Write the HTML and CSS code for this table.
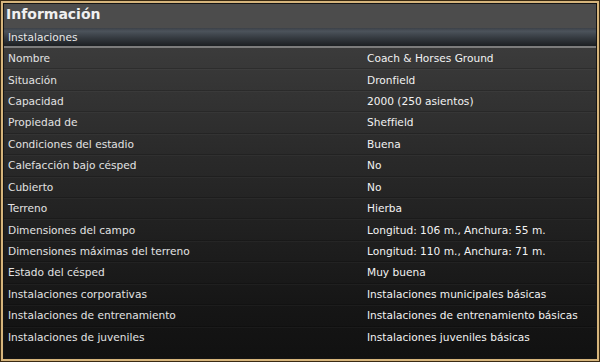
FILE: index.html
```html
<!DOCTYPE html>
<html lang="es">
<head>
<meta charset="utf-8">
<link rel="stylesheet" href="styles.css">
</head>
<body>
<div class="frame">
  <div class="panel">
    <div class="title">Información</div>
    <div class="section">Instalaciones</div>
    <div class="rows">
      <div class="row"><span class="label">Nombre</span><span class="value">Coach &amp; Horses Ground</span></div>
      <div class="row"><span class="label">Situación</span><span class="value">Dronfield</span></div>
      <div class="row"><span class="label">Capacidad</span><span class="value">2000 (250 asientos)</span></div>
      <div class="row"><span class="label">Propiedad de</span><span class="value">Sheffield</span></div>
      <div class="row"><span class="label">Condiciones del estadio</span><span class="value">Buena</span></div>
      <div class="row"><span class="label">Calefacción bajo césped</span><span class="value">No</span></div>
      <div class="row"><span class="label">Cubierto</span><span class="value">No</span></div>
      <div class="row"><span class="label">Terreno</span><span class="value">Hierba</span></div>
      <div class="row"><span class="label">Dimensiones del campo</span><span class="value">Longitud: 106 m., Anchura: 55 m.</span></div>
      <div class="row"><span class="label">Dimensiones máximas del terreno</span><span class="value">Longitud: 110 m., Anchura: 71 m.</span></div>
      <div class="row"><span class="label">Estado del césped</span><span class="value">Muy buena</span></div>
      <div class="row"><span class="label">Instalaciones corporativas</span><span class="value">Instalaciones municipales básicas</span></div>
      <div class="row"><span class="label">Instalaciones de entrenamiento</span><span class="value">Instalaciones de entrenamiento básicas</span></div>
      <div class="row"><span class="label">Instalaciones de juveniles</span><span class="value">Instalaciones juveniles básicas</span></div>
    </div>
  </div>
</div>
</body>
</html>
```

FILE: styles.css
```css
* { box-sizing: border-box; }
html, body { margin: 0; padding: 0; }
body {
  width: 600px;
  height: 362px;
  background: #2a1e0c;
  font-family: "DejaVu Sans", sans-serif;
}
.frame {
  width: 600px;
  height: 362px;
  border: 1px solid #3a2a12;
  background: #d6b57c;
  padding: 2px;
}
.panel {
  height: 100%;
  border: 1px solid #141414;
  background: linear-gradient(to bottom, #424242 0px, #2a2a2a 150px, #161616 300px, #111111 354px);
  display: flex;
  flex-direction: column;
}
.title {
  height: 24px;
  background: #4c4c4c;
  color: #f0f0f0;
  font-weight: bold;
  font-size: 14px;
  line-height: 21px;
  padding-left: 2px;
}
.section {
  height: 20px;
  background: linear-gradient(to bottom, #3c4148 0%, #4c535b 18%, #353a40 55%, #1c1f22 100%);
  border-bottom: 2px solid #7c7c7c;
  color: #e8e8e8;
  font-size: 10.6px;
  line-height: 19px;
  padding-left: 4px;
}
.rows {
  height: 300px;
  display: grid;
  grid-template-rows: repeat(14, 1fr);
}
.row {
  display: grid;
  grid-template-columns: 359px 1fr;
  align-items: center;
  border-bottom: 1px solid rgba(0, 0, 0, 0.18);
  box-shadow: 0 1px 0 rgba(255, 255, 255, 0.03);
  font-size: 10.6px;
  padding-left: 4px;
}
.row:last-child { border-bottom: none; box-shadow: none; }
.label { color: #e2e2e2; }
.value { color: #f2f2f2; }
```
